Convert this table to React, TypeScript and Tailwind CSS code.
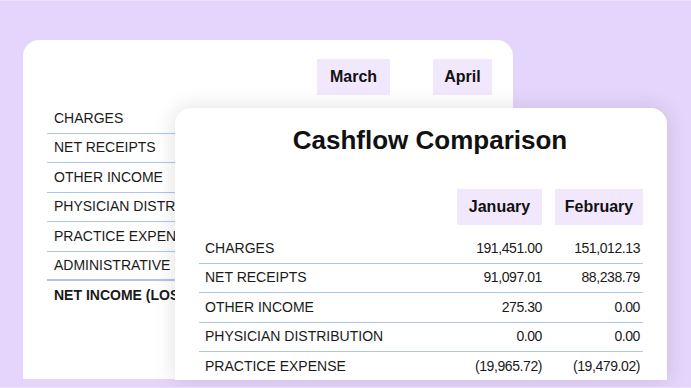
const backRows = [
  'CHARGES',
  'NET RECEIPTS',
  'OTHER INCOME',
  'PHYSICIAN DISTRIBUTION',
  'PRACTICE EXPENSE',
  'ADMINISTRATIVE EXPENSE',
];

const frontRows = [
  { label: 'CHARGES', jan: '191,451.00', feb: '151,012.13' },
  { label: 'NET RECEIPTS', jan: '91,097.01', feb: '88,238.79' },
  { label: 'OTHER INCOME', jan: '275.30', feb: '0.00' },
  { label: 'PHYSICIAN DISTRIBUTION', jan: '0.00', feb: '0.00' },
  { label: 'PRACTICE EXPENSE', jan: '(19,965.72)', feb: '(19,479.02)' },
];

const MonthBox = ({ name, width }: { name: string; width: string }) => (
  <div className={`${width} h-[36px] bg-[#f1e8fe] flex items-center justify-center text-[16px] font-bold text-[#111]`}>
    {name}
  </div>
);

const App = () => {
  return (
    <div className="w-[691px] h-[388px] bg-[#e5d5fc] border-y border-[#ece1fd] relative overflow-hidden font-['Liberation_Sans',Arial,sans-serif] text-[#1a1a1a]">
      {/* Back card */}
      <div className="ml-[23px] mt-[39px] w-[490px] h-[339px] bg-white rounded-t-2xl pt-[19px] pl-[24px]">
        <div className="flex">
          <div className="w-[270px]" />
          <MonthBox name="March" width="w-[73px]" />
          <div className="w-[43px]" />
          <MonthBox name="April" width="w-[59px]" />
        </div>
        <div className="mt-[9px] w-[444px]">
          {backRows.map((r, i) => (
            <div
              key={r}
              className={`h-[29.5px] pl-[7px] flex items-center text-[14px] whitespace-nowrap ${
                i === backRows.length - 1 ? 'border-b-2' : 'border-b'
              } border-[#abc5f6]`}
            >
              {r}
            </div>
          ))}
          <div className="h-[29px] pl-[7px] flex items-center text-[14px] font-bold whitespace-nowrap">
            NET INCOME (LOSS)
          </div>
        </div>
      </div>

      {/* Front card */}
      <div className="absolute left-[175px] top-[107px] w-[492px] h-[272px] bg-white rounded-t-2xl shadow-[0_0_22px_rgba(0,0,0,0.13)] pl-[24px]">
        <h1 className="pt-[17px] pr-[6px] text-center text-[26px] leading-[30px] font-bold text-[#111]">
          Cashflow Comparison
        </h1>
        <div className="mt-[34px] flex">
          <div className="w-[258px]" />
          <MonthBox name="January" width="w-[85px]" />
          <div className="w-[13px]" />
          <MonthBox name="February" width="w-[88px]" />
        </div>
        <div className="mt-[9px] w-[444px]">
          {frontRows.map((r, i) => (
            <div
              key={r.label}
              className={`h-[29.5px] flex items-center text-[14px] whitespace-nowrap ${
                i < frontRows.length - 1 ? 'border-b border-[#abc5f6]' : ''
              }`}
            >
              <div className="w-[258px] pl-[6px]">{r.label}</div>
              <div className="w-[85px] text-right tracking-[-0.03em]">{r.jan}</div>
              <div className="w-[98px] text-right tracking-[-0.03em]">{r.feb}</div>
            </div>
          ))}
        </div>
      </div>
    </div>
  );
};

export default App;
